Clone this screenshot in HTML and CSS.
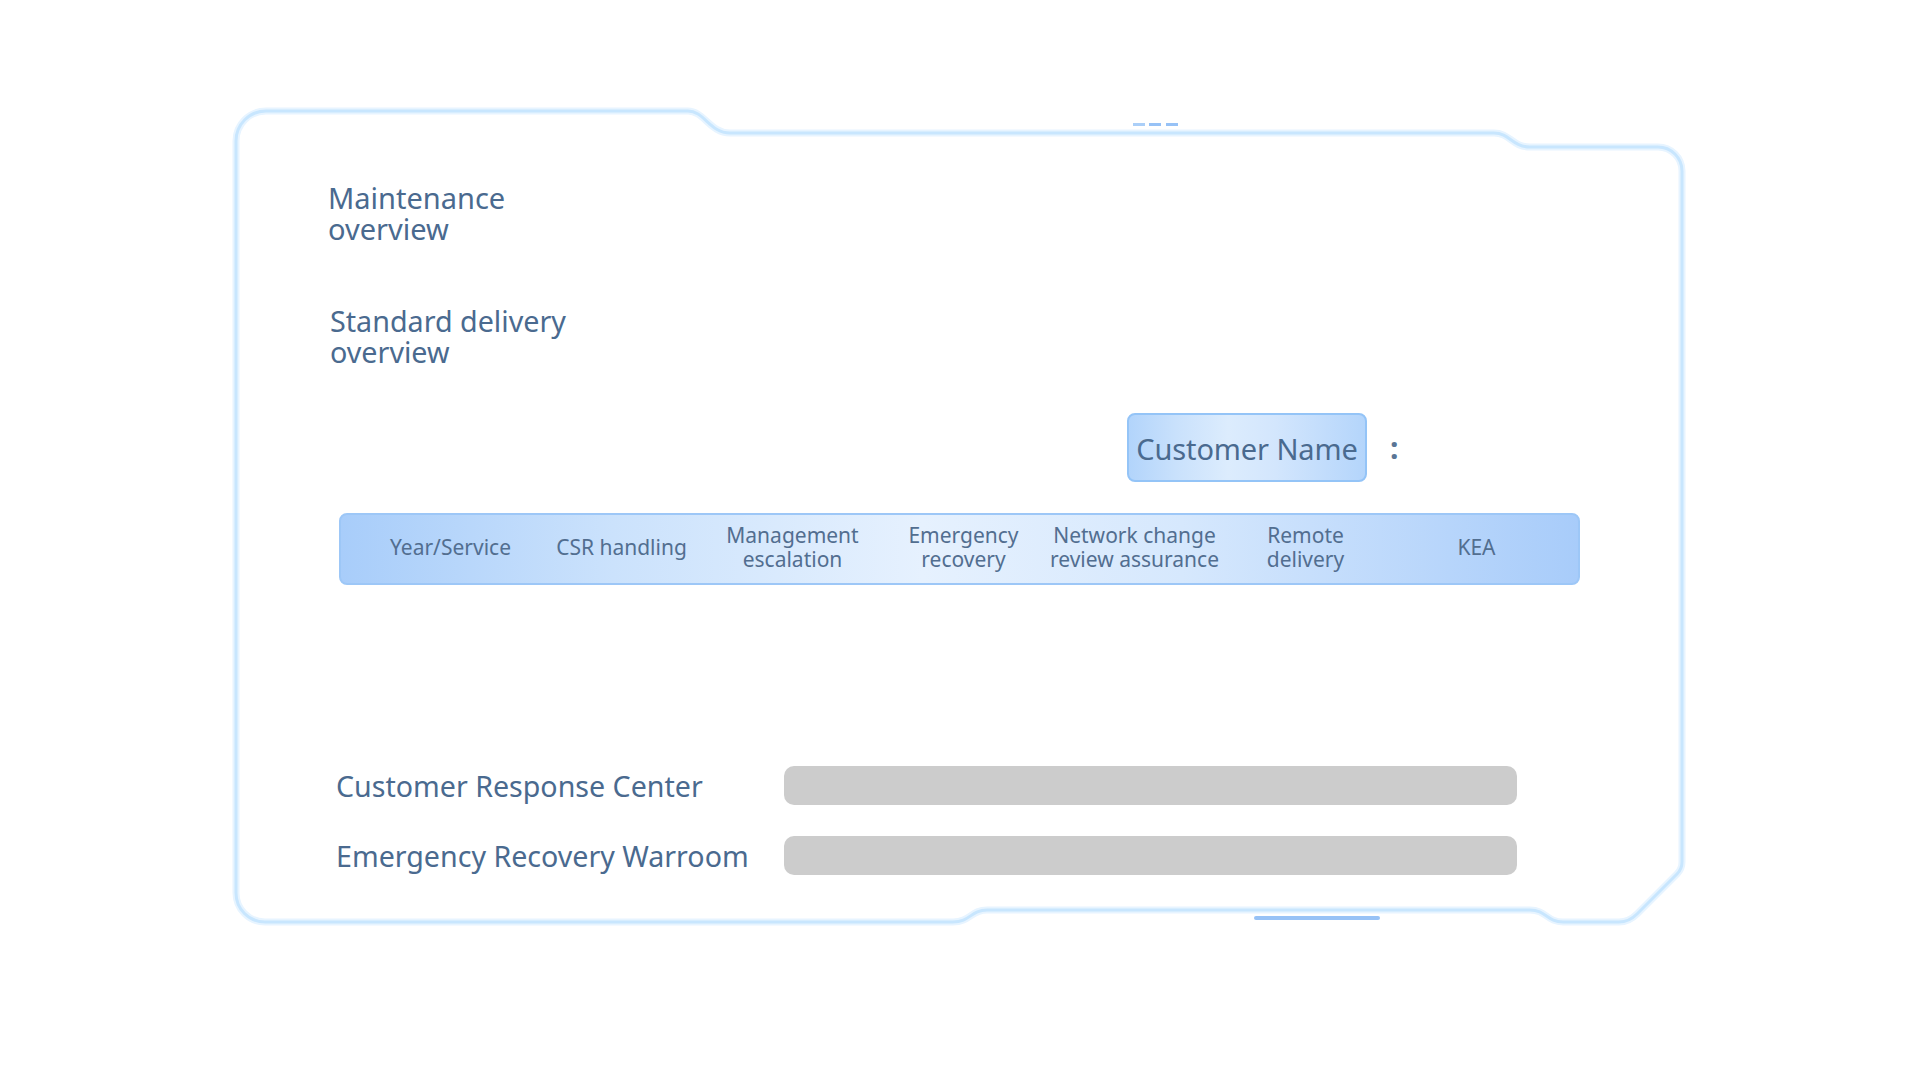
FILE: index.html
```html
<!DOCTYPE html>
<html lang="en">
<head>
<meta charset="utf-8">
<title>Overview</title>
<link rel="stylesheet" href="styles.css">
</head>
<body>
<div class="stage">
  <svg class="frame" viewBox="0 0 1920 1080" width="1920" height="1080" aria-hidden="true">
    <path class="frame-glow" d="M236 141 A30 30 0 0 1 266 111 H688 C704 111 710 133 730 133 H1494 C1510 133 1512 147 1530 147 H1658 A24 24 0 0 1 1682 171 V862 Q1682 869 1677 874 L1637 914 Q1629 922 1619 922 H1563 C1547 922 1546 910 1530 910 H987 C971 910 970 922 953 922 H265 A29 29 0 0 1 236 893 Z"/>
    <path class="frame-line" d="M236 141 A30 30 0 0 1 266 111 H688 C704 111 710 133 730 133 H1494 C1510 133 1512 147 1530 147 H1658 A24 24 0 0 1 1682 171 V862 Q1682 869 1677 874 L1637 914 Q1629 922 1619 922 H1563 C1547 922 1546 910 1530 910 H987 C971 910 970 922 953 922 H265 A29 29 0 0 1 236 893 Z"/>
    <rect x="1133" y="123" width="12" height="3" fill="#abcff8"/>
    <rect x="1149" y="123" width="12" height="3" fill="#97c2f6"/>
    <rect x="1166" y="123" width="12" height="3" fill="#97c2f6"/>
    <rect x="1254" y="916" width="126" height="4" rx="2" fill="#97c2f6"/>
  </svg>

  <main class="content">
    <h2 class="title title-first">Maintenance<br>overview</h2>
    <h2 class="title title-second">Standard delivery<br>overview</h2>

    <div class="customer">
      <span class="name-box">Customer Name</span>
      <span class="colon">:</span>
    </div>

    <div class="table-head">
      <div class="cell">Year/Service</div>
      <div class="cell">CSR handling</div>
      <div class="cell">Management<br>escalation</div>
      <div class="cell">Emergency<br>recovery</div>
      <div class="cell">Network change<br>review assurance</div>
      <div class="cell">Remote<br>delivery</div>
      <div class="cell">KEA</div>
    </div>

    <div class="rows">
      <div class="row-label">Customer Response Center</div>
      <div class="row-bar"></div>
      <div class="row-label">Emergency Recovery Warroom</div>
      <div class="row-bar"></div>
    </div>
  </main>
</div>
</body>
</html>
```

FILE: styles.css
```css
* { box-sizing: border-box; }

html, body {
  margin: 0;
  padding: 0;
  background: #ffffff;
}

body {
  font-family: "Noto Sans", "Open Sans", "DejaVu Sans", sans-serif;
  color: #4a6a8f;
}

.stage {
  position: relative;
  width: 1920px;
  height: 1080px;
  overflow: hidden;
}

.frame {
  position: absolute;
  left: 0;
  top: 0;
  pointer-events: none;
}

.frame-glow {
  fill: none;
  stroke: #e7f4ff;
  stroke-width: 7;
}

.frame-line {
  fill: none;
  stroke: #c8e6fe;
  stroke-width: 3;
}

.content {
  position: relative;
  padding: 182px 0 0 328px;
  display: flex;
  flex-direction: column;
  align-items: flex-start;
}

.title {
  margin: 0;
  font-size: 29px;
  line-height: 31px;
  font-weight: 400;
  color: #4a6a8f;
}

.title-second {
  margin-top: 61px;
  margin-left: 2px;
  font-size: 28.7px;
}

.customer {
  margin-top: 46px;
  margin-left: 799px;
  display: flex;
  align-items: center;
  height: 69px;
}

.name-box {
  display: flex;
  align-items: center;
  justify-content: center;
  width: 240px;
  height: 69px;
  padding-top: 2px;
  border: 2px solid #94c4f7;
  border-radius: 8px;
  background: linear-gradient(90deg, #b2d4fb 0%, #c9e1fc 20%, #dcecfd 42%, #d3e6fd 62%, #b4d5fb 100%);
  font-size: 29px;
  line-height: 40px;
  color: #4a6a8f;
  letter-spacing: -0.1px;
}

.colon {
  margin-left: 23px;
  font-size: 30px;
  line-height: 69px;
  font-weight: 700;
  color: #5a7595;
}

.table-head {
  margin-top: 31px;
  margin-left: 11px;
  width: 1241px;
  height: 72px;
  padding: 0 16px 4px 24px;
  border: 2px solid #9dc7f7;
  border-radius: 8px;
  background: linear-gradient(90deg, #a8cdfa 0%, #cbe2fc 22%, #e6f1fe 47%, #d6e8fd 68%, #a8ccfa 100%);
  display: grid;
  grid-template-columns: repeat(7, 171px);
  align-items: center;
}

.cell {
  text-align: center;
  font-size: 21px;
  line-height: 24px;
  color: #526e90;
  white-space: nowrap;
}

.rows {
  margin-top: 181px;
  margin-left: 8px;
  display: grid;
  grid-template-columns: 448px 733px;
  grid-auto-rows: 39px;
  row-gap: 31px;
  align-items: center;
}

.row-label {
  font-size: 28.6px;
  line-height: 39px;
  color: #4a6a8f;
  white-space: nowrap;
}

.row-bar {
  height: 39px;
  border-radius: 10px;
  background: #cccccc;
}
```
